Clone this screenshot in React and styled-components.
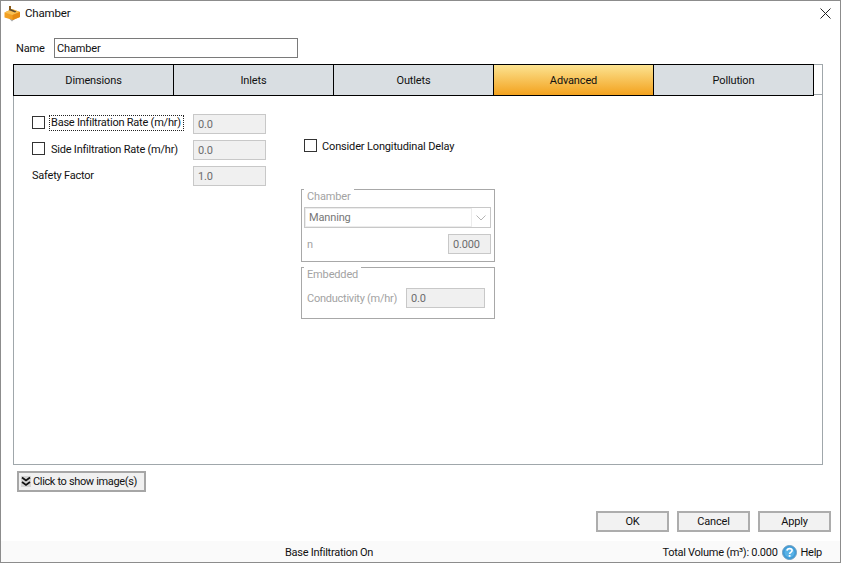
import React from "react"
import styled, { createGlobalStyle } from "styled-components"

const GlobalStyle = createGlobalStyle`
  html, body {
    margin: 0;
    padding: 0;
    background: #fff;
  }
  * {
    box-sizing: border-box;
  }
`

const Window = styled.div`
  width: 841px;
  height: 563px;
  display: flex;
  flex-direction: column;
  background: #fff;
  border: 1px solid #8c8c8c;
  color: #111;
  font-family: Roboto, "Liberation Sans", Arial, sans-serif;
  font-size: 11px;
  letter-spacing: -0.15px;
  overflow: hidden;
`

const TitleBar = styled.div`
  height: 27px;
  padding: 0 9px 3px 3px;
  display: flex;
  align-items: center;
  gap: 4px;
`

const TitleText = styled.span`
  flex: 1;
  font-size: 11.5px;
`

const NameRow = styled.div`
  margin: 10px 0 6px 15px;
  height: 20px;
  display: flex;
  align-items: center;
`

const NameLabel = styled.span`
  width: 38px;
  flex: none;
`

const NameInput = styled.div`
  width: 244px;
  height: 20px;
  border: 1px solid #7a7a7a;
  padding: 0 2px;
  line-height: 19px;
`

const TabControl = styled.div`
  width: 810px;
  height: 401px;
  margin-left: 12px;
  border: 1px solid #a0a7ab;
  display: flex;
  flex-direction: column;
`

const TabStrip = styled.div`
  height: 31px;
  margin: -1px 0 0 -1px;
  border-bottom: 1px solid #a0a7ab;
  display: flex;
  flex: none;
`

const Tab = styled.div`
  width: ${({ $last }) => ($last ? "161px" : "160px")};
  height: 32px;
  border: 1px solid #000;
  border-right: ${({ $last }) => ($last ? "1px solid #000" : "none")};
  background: ${({ $active }) =>
    $active ? "linear-gradient(#fce391, #f3a21e)" : "#d9dee2"};
  display: flex;
  align-items: center;
  justify-content: center;
`

const TabBody = styled.div`
  flex: 1;
  display: flex;
  padding-top: 19px;
`

const LeftColumn = styled.div`
  width: 287px;
  padding-left: 18px;
  display: flex;
  flex-direction: column;
  gap: 6px;
`

const FieldRow = styled.div`
  height: 20px;
  display: flex;
  align-items: center;
`

const Check = styled.span`
  width: 13px;
  height: 13px;
  border: 1px solid #333;
  background: #fff;
  flex: none;
  margin-right: ${({ $gap }) => $gap}px;
  margin-top: ${({ $top }) => $top || 0}px;
`

const RowLabel = styled.span`
  width: ${({ $width }) => $width}px;
  flex: none;
  white-space: nowrap;
  margin-top: -2px;
  letter-spacing: -0.22px;
`

const FocusLabel = styled(RowLabel)`
  outline: 1px dotted #222;
  line-height: 14px;
  padding-left: 1px;
  margin-right: 10px;
`

const ReadOnlyBox = styled.div`
  width: ${({ $width }) => $width}px;
  height: 20px;
  background: #f0f0f0;
  border: 1px solid #c8c8c8;
  color: #6d6d6d;
  padding: 0 4px;
  line-height: 20px;
  flex: none;
`

const RightColumn = styled.div`
  width: 194px;
  display: flex;
  flex-direction: column;
`

const DelayRow = styled.div`
  height: 14px;
  margin: 24px 0 37px 3px;
  display: flex;
  align-items: center;
  white-space: nowrap;
`

const DelayText = styled.span`
  margin-top: 2px;
`

const Group = styled.div`
  width: 194px;
  height: ${({ $height }) => $height}px;
  margin-bottom: 5px;
  border: 1px solid #a8a8a8;
  padding: 0 3px 0 2px;
  color: #a3a3a3;
`

const Legend = styled.div`
  display: inline-block;
  height: 14px;
  margin-top: -1px;
  background: #fff;
  padding: 1px 3px 0;
  line-height: 14px;
  vertical-align: top;
`

const GroupLine = styled.div`
  display: flex;
  align-items: center;
  justify-content: ${({ $between }) => ($between ? "space-between" : "flex-start")};
  height: 20px;
  margin-top: ${({ $top }) => $top}px;
  padding-left: 3px;
  white-space: nowrap;
`

const GroupLabel = styled.span`
  width: ${({ $width }) => $width}px;
  flex: none;
  letter-spacing: -0.25px;
`

const SelectBox = styled.div`
  height: 21px;
  margin-top: 4px;
  width: 187px;
  border: 1px solid #c8c8c8;
  display: flex;
  align-items: stretch;
`

const SelectValue = styled.div`
  flex: 1;
  border: 1px solid #ececec;
  padding-left: 3px;
  color: #777;
  line-height: 17px;
`

const SelectArrow = styled.div`
  width: 18px;
  display: flex;
  align-items: center;
  justify-content: center;
`

const ImageButton = styled.div`
  width: 129px;
  height: 21px;
  margin: 6px 0 0 16px;
  background: #f0f0f0;
  border: 2px solid #a6a6a6;
  display: flex;
  align-items: center;
  padding-left: 2px;
  gap: 2px;
  white-space: nowrap;
  letter-spacing: -0.35px;
`

const ChevronBox = styled.span`
  width: 10px;
  height: 11px;
  background: #d4d4d4;
  display: flex;
  flex: none;
`

const Actions = styled.div`
  margin: 19px 9px 0 0;
  display: flex;
  justify-content: flex-end;
  gap: 8px;
`

const ActionButton = styled.div`
  width: 73px;
  height: 21px;
  background: #f2f2f2;
  border: 2px solid #adadad;
  display: flex;
  align-items: center;
  justify-content: center;
`

const StatusBar = styled.div`
  margin-top: auto;
  height: 21px;
  background: #fafafa;
  display: flex;
  justify-content: space-between;
  align-items: center;
  padding: 1px 18px 0 284px;
`

const StatusRight = styled.div`
  display: flex;
  align-items: center;
  gap: 4px;
  white-space: nowrap;
`

const StatusText = styled.span`
  white-space: nowrap;
  letter-spacing: -0.27px;
`

const AppIcon = () => (
  <svg width="17" height="17" viewBox="0 0 17 17">
    <path d="M8 16.500 4.500 13h7z" fill="#a9a9a9" />
    <path d="M.5 7.500 8 4l8 3v5L9 15 .5 12.500z" fill="#f2a022" />
    <path d="M.5 7.500 8.500 10 16 7 8 4z" fill="#f8bf52" />
    <path d="M8.500 10v5l7.500-3V7z" fill="#e58a12" />
    <path d="M5 1h2v4H5z" fill="#8a5a18" />
    <path d="M4.500 5 11 7.500l1.500-1L7 4z" fill="#5e4a2c" />
  </svg>
)

const CloseIcon = () => (
  <svg width="11" height="11" viewBox="0 0 11 11">
    <path d="M.5.500l10 10M10.500.500l-10 10" stroke="#222" strokeWidth="1" fill="none" />
  </svg>
)

const ArrowIcon = () => (
  <svg width="10" height="6" viewBox="0 0 10 6">
    <path d="M.5.500 5 5 9.500.500" stroke="#b5b5b5" fill="none" />
  </svg>
)

const DoubleChevron = () => (
  <svg width="10" height="11" viewBox="0 0 10 11">
    <path d="M1 1.500 5 4.500l4-3M1 6 5 9l4-3" stroke="#111" strokeWidth="1.700" fill="none" />
  </svg>
)

const HelpIcon = () => (
  <svg width="15" height="15" viewBox="0 0 15 15">
    <circle cx="7.500" cy="7.500" r="7" fill="#3d9bd8" stroke="#6f9fc0" strokeWidth="1" />
    <circle cx="7.500" cy="7.500" r="5" fill="#59b2e6" />
    <path d="M5 5.700C5.200 4.200 6.300 3.600 7.600 3.600c1.500 0 2.500.9 2.500 2 0 1.700-2.500 1.700-2.500 3.300" stroke="#fff" strokeWidth="1.600" fill="none" />
    <rect x="6.700" y="10" width="1.800" height="1.800" fill="#fff" />
  </svg>
)

const tabs = ["Dimensions", "Inlets", "Outlets", "Advanced", "Pollution"]

const App = () => (
  <>
    <GlobalStyle />
    <Window>
      <TitleBar>
        <AppIcon />
        <TitleText>Chamber</TitleText>
        <CloseIcon />
      </TitleBar>
      <NameRow>
        <NameLabel>Name</NameLabel>
        <NameInput>Chamber</NameInput>
      </NameRow>
      <TabControl>
        <TabStrip>
          {tabs.map((tab, i) => (
            <Tab key={tab} $active={tab === "Advanced"} $last={i === tabs.length - 1}>
              {tab}
            </Tab>
          ))}
        </TabStrip>
        <TabBody>
          <LeftColumn>
            <FieldRow>
              <Check $gap={5} $top={-4} />
              <FocusLabel $width={133}>Base Infiltration Rate (m/hr)</FocusLabel>
              <ReadOnlyBox $width={73}>0.0</ReadOnlyBox>
            </FieldRow>
            <FieldRow>
              <Check $gap={6} $top={-4} />
              <RowLabel $width={142}>Side Infiltration Rate (m/hr)</RowLabel>
              <ReadOnlyBox $width={73}>0.0</ReadOnlyBox>
            </FieldRow>
            <FieldRow>
              <RowLabel $width={161}>Safety Factor</RowLabel>
              <ReadOnlyBox $width={73}>1.0</ReadOnlyBox>
            </FieldRow>
          </LeftColumn>
          <RightColumn>
            <DelayRow>
              <Check $gap={5} />
              <DelayText>Consider Longitudinal Delay</DelayText>
            </DelayRow>
            <Group $height={73}>
              <Legend>Chamber</Legend>
              <SelectBox>
                <SelectValue>Manning</SelectValue>
                <SelectArrow>
                  <ArrowIcon />
                </SelectArrow>
              </SelectBox>
              <GroupLine $between $top={6}>
                <span>n</span>
                <ReadOnlyBox $width={43}>0.000</ReadOnlyBox>
              </GroupLine>
            </Group>
            <Group $height={52}>
              <Legend>Embedded</Legend>
              <GroupLine $top={7}>
                <GroupLabel $width={99}>Conductivity (m/hr)</GroupLabel>
                <ReadOnlyBox $width={79}>0.0</ReadOnlyBox>
              </GroupLine>
            </Group>
          </RightColumn>
        </TabBody>
      </TabControl>
      <ImageButton>
        <ChevronBox>
          <DoubleChevron />
        </ChevronBox>
        Click to show image(s)
      </ImageButton>
      <Actions>
        <ActionButton>OK</ActionButton>
        <ActionButton>Cancel</ActionButton>
        <ActionButton>Apply</ActionButton>
      </Actions>
      <StatusBar>
        <StatusText>Base Infiltration On</StatusText>
        <StatusRight>
          <StatusText>Total Volume (m³): 0.000</StatusText>
          <HelpIcon />
          <StatusText>Help</StatusText>
        </StatusRight>
      </StatusBar>
    </Window>
  </>
)

export default App
